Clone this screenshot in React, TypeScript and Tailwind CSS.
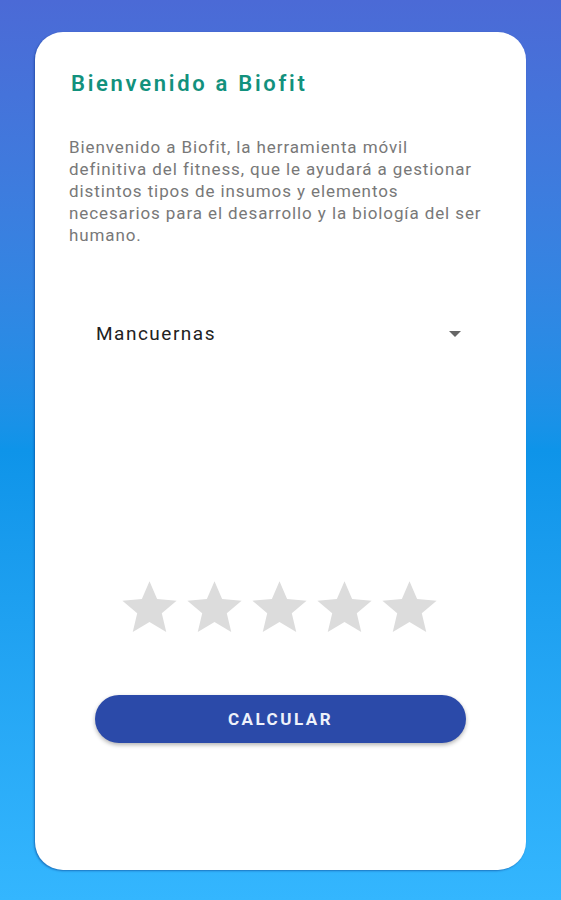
import { useState } from 'react';

// Material "star" glyph, the same one used by the rating widget
const STAR_PATH = "M12 17.27L18.18 21l-1.64-7.03L22 9.24l-7.19-.61L12 2 9.19 8.63 2 9.24l5.46 4.73L5.82 21z";

function Star({ filled }: { filled: boolean }) {
  return (
    <svg viewBox="0 0 24 24" preserveAspectRatio="none" className="w-[65px] h-[64px] block">
      <path d={STAR_PATH} fill={filled ? "#fbbf24" : "#dcdcdc"} />
    </svg>
  );
}

export default function App() {
  const [rating, setRating] = useState(0);

  return (
    <div className="min-h-[900px] w-full bg-gradient-to-b from-[#4b6ad6] via-[#0e94e9] to-[#34b6fe] pt-[32px] font-['Roboto',sans-serif]">
      <div className="mx-[35px] h-[838px] rounded-[28px] bg-white shadow-[-1px_1px_2px_rgba(0,40,120,0.45)] pt-[38px] px-[36px]">
        <h1 className="text-[22px] leading-[28px] font-semibold tracking-[2.7px] text-[#12917d] whitespace-nowrap">Bienvenido a Biofit</h1>

        <p className="mt-[38px] text-[17px] leading-[22px] tracking-[0.9px] text-[#787878] whitespace-nowrap -ml-[2px]">
          Bienvenido a Biofit, la herramienta móvil<br />
          definitiva del fitness, que le ayudará a gestionar<br />
          distintos tipos de insumos y elementos<br />
          necesarios para el desarrollo y la biología del ser<br />
          humano.
        </p>

        <div className="mx-[24px] mt-[60px]">
          <div className="flex items-center justify-between h-[56px] pl-[1px] pr-[5px]">
            <span className="text-[19px] tracking-[1.5px] text-[#222]">Mancuernas</span>
            <svg viewBox="0 0 12 6" className="w-[12px] h-[6px]">
              <path d="M0 0h12L6 6z" fill="#666" />
            </svg>
          </div>

          <div className="mt-[214px] flex justify-center -ml-[2px]">
            {[1, 2, 3, 4, 5].map((n) => (
              <button key={n} onClick={() => setRating(n)} className="p-0">
                <Star filled={n <= rating} />
              </button>
            ))}
          </div>

          <button className="mt-[55px] w-full h-[48px] rounded-full bg-[#2b4aa9] shadow-[0_2px_4px_rgba(0,0,0,0.3)] text-[#eef1fa] text-[17px] leading-[48px] font-bold tracking-[2.5px]">
            CALCULAR
          </button>
        </div>
      </div>
    </div>
  );
}
